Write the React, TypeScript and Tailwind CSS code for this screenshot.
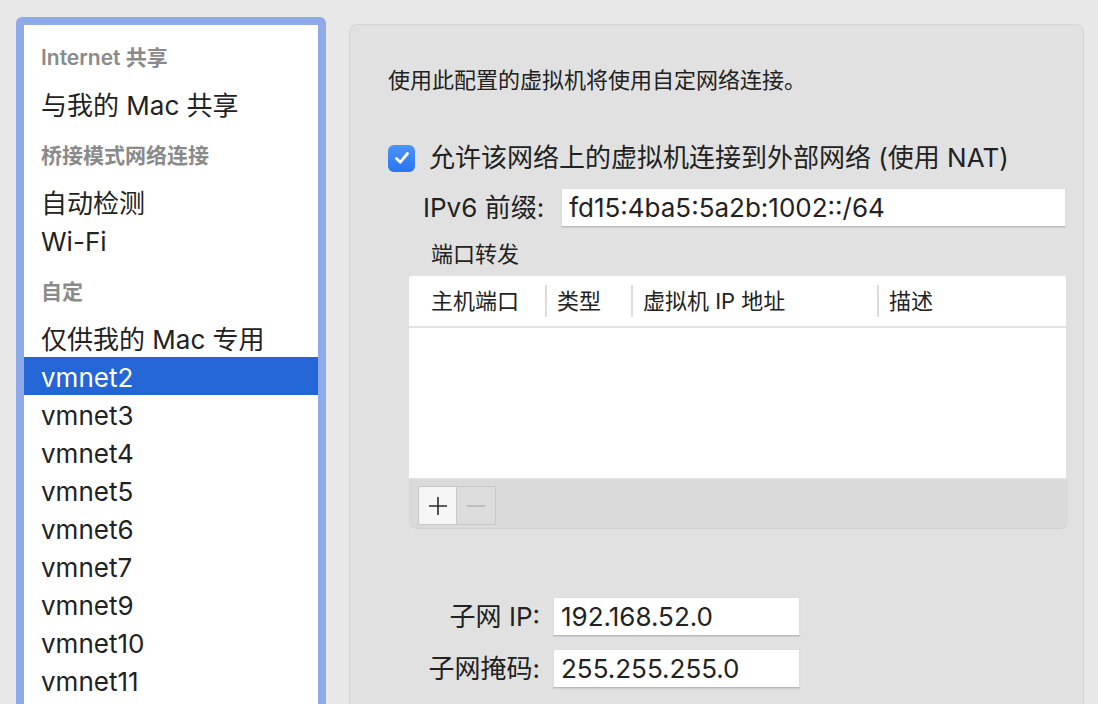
import React from 'react';

const font = "font-['Inter','Noto_Sans_CJK_SC',sans-serif]";

const SideHeader = ({ label }: { label: string }) => (
  <div className="h-[60px] pt-[22px] pl-[17px] text-[21px] leading-[22px] font-semibold text-[#8a8a8a]">
    {label}
  </div>
);

const SideItem = ({ label, selected }: { label: string; selected?: boolean }) => (
  <div
    className={
      selected
        ? 'h-[38px] flex items-center pl-[17px] pt-[2px] text-[26px] bg-[#2566d7] text-white'
        : 'h-[38px] flex items-center pl-[17px] pt-[2px] text-[26px] text-[#222]'
    }
  >
    {label}
  </div>
);

const TextField = ({ value, className }: { value: string; className: string }) => (
  <div
    className={`h-[39px] flex items-center px-[7px] bg-white border border-[#dedede] border-b-[#b9b9b9] shadow-[0_1px_1px_rgba(0,0,0,0.08)] text-[26px] text-[#222] ${className}`}
  >
    {value}
  </div>
);

const App = () => {
  const nets = ['vmnet3', 'vmnet4', 'vmnet5', 'vmnet6', 'vmnet7', 'vmnet9', 'vmnet10', 'vmnet11'];

  return (
    <div className={`w-[1098px] h-[704px] overflow-hidden bg-[#e8e8e8] flex items-start ${font}`}>
      {/* Sidebar list */}
      <div className="ml-[16px] mt-[17px] w-[310px] h-[720px] shrink-0 rounded-[6px] border-[8px] border-[#8eaae8] bg-white overflow-hidden">
        <SideHeader label="Internet 共享" />
        <SideItem label="与我的 Mac 共享" />
        <SideHeader label="桥接模式网络连接" />
        <SideItem label="自动检测" />
        <SideItem label="Wi-Fi" />
        <SideHeader label="自定" />
        <SideItem label="仅供我的 Mac 专用" />
        <SideItem label="vmnet2" selected />
        {nets.map((n) => (
          <SideItem key={n} label={n} />
        ))}
      </div>

      {/* Settings panel */}
      <div className="ml-[23px] mt-[24px] w-[735px] h-[720px] shrink-0 rounded-[8px] border border-[#d4d4d4] bg-[#e1e1e1] pl-[38px] flex flex-col items-start">
        <div className="mt-[41px] text-[22px] leading-[28px] text-[#222]">
          使用此配置的虚拟机将使用自定网络连接。
        </div>

        <div className="mt-[50px] h-[28px] flex items-center gap-[14px]">
          <div className="w-[27px] h-[27px] rounded-[6px] bg-gradient-to-b from-[#4d94f8] to-[#2a74f0] flex items-center justify-center">
            <svg width="18" height="18" viewBox="0 0 18 18" fill="none">
              <path d="M3.5 9.5 L7.3 13.2 L14.5 4.5" stroke="white" strokeWidth="2.8" strokeLinecap="round" strokeLinejoin="round" />
            </svg>
          </div>
          <div className="text-[26px] leading-[28px] text-[#222]">
            允许该网络上的虚拟机连接到外部网络 (使用 NAT)
          </div>
        </div>

        <div className="mt-[16px] ml-[35px] flex items-center gap-[17px]">
          <div className="text-[26px] text-[#222]">IPv6 前缀:</div>
          <TextField value="fd15:4ba5:5a2b:1002::/64" className="w-[505px]" />
        </div>

        <div className="mt-[15px] ml-[43px] text-[22px] leading-[24px] text-[#222]">端口转发</div>

        {/* Port forwarding table */}
        <div className="mt-[9px] ml-[21px] w-[659px] flex flex-col">
          <div className="h-[51px] w-[657px] bg-white rounded-t-[3px] border-t border-[#e4e4e4] flex items-center text-[22px] text-[#222]">
            <div className="w-[136px] pl-[22px]">主机端口</div>
            <div className="w-[2px] h-[32px] bg-[#dcdcdc]" />
            <div className="w-[84px] pl-[10px]">类型</div>
            <div className="w-[2px] h-[32px] bg-[#dcdcdc]" />
            <div className="w-[244px] pl-[10px]">虚拟机 IP 地址</div>
            <div className="w-[2px] h-[32px] bg-[#dcdcdc]" />
            <div className="pl-[10px]">描述</div>
          </div>
          <div className="h-[2px] w-[657px] bg-[#e3e3e3]" />
          <div className="h-[150px] w-[657px] bg-white" />
          <div className="h-[51px] w-[659px] bg-[#dadada] rounded-b-[8px] border-t border-b border-[#d0d0d0] border-t-[#e2e2e2] flex items-start pt-[7px] pl-[9px]">
            <div className="w-[39px] h-[39px] bg-[#f6f6f6] border border-[#c8c8c8] flex items-center justify-center">
              <svg width="22" height="22" viewBox="0 0 22 22">
                <path d="M11 2 V20 M2 11 H20" stroke="#2a2a2a" strokeWidth="1.6" />
              </svg>
            </div>
            <div className="w-[39px] h-[39px] bg-[#dcdcdc] border border-[#c8c8c8] border-l-0 flex items-center justify-center">
              <svg width="22" height="22" viewBox="0 0 22 22">
                <path d="M2 11 H20" stroke="#b6b6b6" strokeWidth="1.6" />
              </svg>
            </div>
          </div>
        </div>

        {/* Subnet */}
        <div className="mt-[68px] flex items-center gap-[13px]">
          <div className="w-[152px] text-right text-[26px] text-[#222]">子网 IP:</div>
          <TextField value="192.168.52.0" className="w-[247px]" />
        </div>
        <div className="mt-[13px] flex items-center gap-[13px]">
          <div className="w-[152px] text-right text-[26px] text-[#222]">子网掩码:</div>
          <TextField value="255.255.255.0" className="w-[247px]" />
        </div>
      </div>
    </div>
  );
};

export default App;
